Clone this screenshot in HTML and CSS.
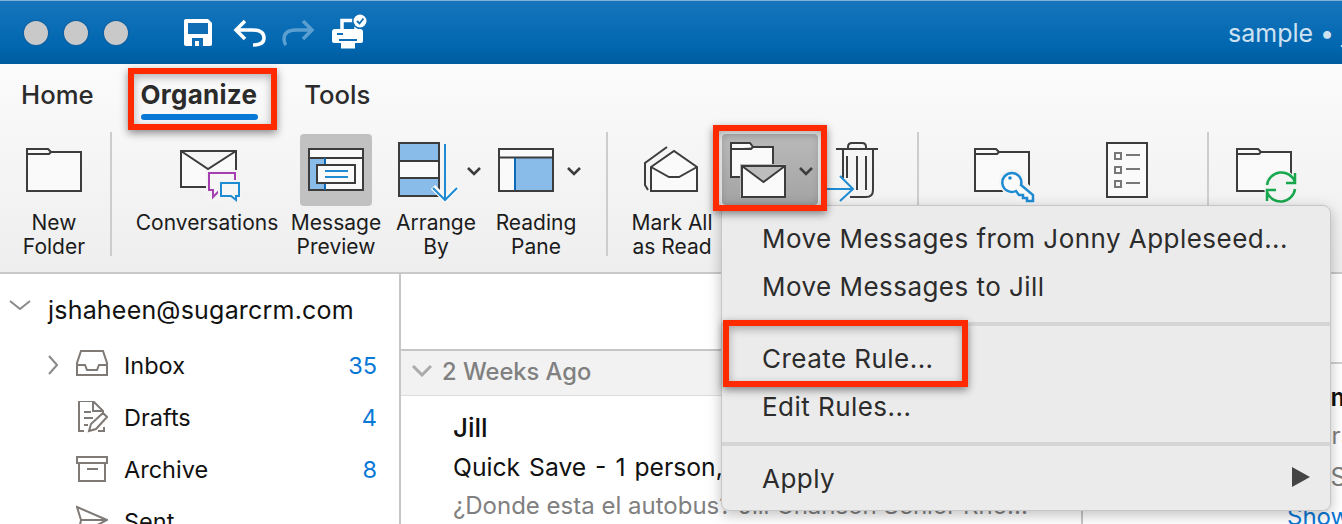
FILE: index.html
```html
<!DOCTYPE html>
<html lang="en">
<head>
<meta charset="utf-8">
<title>Outlook Organize</title>
<link rel="stylesheet" href="styles.css">
</head>
<body>
<div class="app">
  <header class="titlebar">
    <div class="lights"><span class="light"></span><span class="light"></span><span class="light"></span></div>
    <svg class="qa" viewBox="170 8 210 48" aria-hidden="true">
      <path class="qa-fill" d="M186 18H208L212 22V43Q212 45 210 45H186Q184 45 184 43V20Q184 18 186 18Z"/>
      <path class="qa-cut" d="M188 22H208V33H188ZM192 37H203V45H192Z"/>
      <path class="qa-fill" d="M195 40H199V45H195Z"/>
      <path class="qa-line" d="M245 20L236 29L245 38M236 29H252Q264 29 264 37Q264 44 253 44"/>
      <path class="qa-dim" d="M303 20L312 29L303 38M312 29H296Q284 29 284 38Q284 42 286 44"/>
      <path class="qa-line" d="M342 29V19.500H356V29"/>
      <path class="qa-fill" d="M335 28H360Q363 28 363 31V40Q363 42 361 42H334Q332 42 332 40V31Q332 28 335 28Z"/>
      <path class="qa-cut" d="M337 32H343V34H337ZM339 38H357V40H339Z"/>
      <path class="qa-fill" d="M341 40H355V47.500H341Z"/>
      <circle class="qa-cut" cx="360" cy="20" r="8"/>
      <circle class="qa-fill" cx="360" cy="20" r="6.500"/>
      <path class="qa-tick" d="M357 20L359.500 22.500L363.500 17.500"/>
    </svg>
    <div class="doc-title">sample • jshaheen@sugarcrm.com</div>
  </header>

  <div class="chrome">
    <nav class="tabs">
      <span class="tab tab-home">Home</span>
      <span class="tab tab-org">Organize</span>
      <span class="tab tab-tools">Tools</span>
    </nav>
    <div class="ribbon">
      <div class="item i-new">
        <svg class="icon" viewBox="0 134 108 72" aria-hidden="true">
          <path class="ln pg" d="M27 191V149H48L51 152H81V191ZM27 154H49L51 152"/>
        </svg>
        <span class="label">New<br>Folder</span>
      </div>
      <i class="sep s1"></i>
      <div class="item i-conv">
        <svg class="icon" viewBox="133 134 148 72" aria-hidden="true">
          <path class="ln pg" d="M181 151H236V187H181ZM181 151L208 169L236 151"/>
          <path class="halo" d="M206 170H238V193H222V201H206Z"/>
          <path class="bub-p" d="M209 173H235V190H220L213 197V190H209Z"/>
          <path class="halo" d="M218 180H242V199H218Z"/>
          <path class="bub-b" d="M221 183H239V196H236V200L231 196H221Z"/>
        </svg>
        <span class="label">Conversations</span>
      </div>
      <div class="item i-msg">
        <svg class="icon" viewBox="290 134 92 72" aria-hidden="true">
          <rect class="pressed" x="300" y="134" width="72" height="72" rx="4"/>
          <rect class="pg" x="309" y="149" width="54" height="41"/>
          <rect class="blue" x="310" y="158" width="15" height="32"/>
          <path class="ln" d="M309 149H363V190H309ZM309 158H363"/>
          <path class="ln-deep" d="M325 158V190"/>
          <rect class="ln pg" x="317" y="165" width="38" height="18"/>
          <path class="ln-blue" d="M325 171H348M325 177H348"/>
        </svg>
        <span class="label">Message<br>Preview</span>
      </div>
      <div class="item i-arr">
        <svg class="icon" viewBox="390 134 92 72" aria-hidden="true">
          <rect class="blue" x="399" y="143" width="40" height="53"/>
          <rect class="pg" x="399" y="161" width="40" height="17"/>
          <path class="ln" d="M399 143H439V196H399ZM399 161H439M399 178H439"/>
          <path class="halo-line" d="M433 187L445 199L457 187"/>
          <path class="ln-blue" d="M445 144V200M433 188L445 200L457 188"/>
          <path class="chev" d="M468 168L474 174L480 168"/>
        </svg>
        <span class="label">Arrange<br>By</span>
      </div>
      <div class="item i-read">
        <svg class="icon" viewBox="490 134 92 72" aria-hidden="true">
          <rect class="pg" x="499" y="149" width="54" height="42"/>
          <rect class="blue" x="515" y="158" width="38" height="33"/>
          <path class="ln" d="M499 149H553V191H499ZM499 157.500H553"/>
          <path class="ln-deep" d="M515 158V190"/>
          <path class="chev" d="M568 168L574 174L580 168"/>
        </svg>
        <span class="label">Reading<br>Pane</span>
      </div>
      <i class="sep s2"></i>
      <div class="item i-mark">
        <svg class="icon" viewBox="628 134 88 72" aria-hidden="true">
          <path class="ln" d="M667 147L645 163V185L648 190"/>
          <path class="ln pg" d="M651 167L674 151L697 167V191H651Z"/>
          <path class="ln" d="M651 167L669 177H679L697 167"/>
        </svg>
        <span class="label">Mark All<br>as Read</span>
      </div>
      <div class="item i-move">
        <svg class="icon" viewBox="722 134 168 72" aria-hidden="true">
          <defs>
            <linearGradient id="pressGrad" x1="0" y1="0" x2="0" y2="1">
              <stop offset="0" stop-color="#bababa"/>
              <stop offset="1" stop-color="#a3a3a3"/>
            </linearGradient>
          </defs>
          <rect class="pressed-grad" x="722" y="134" width="96" height="71" rx="4"/>
          <path class="ln pg" d="M731 177V143H750L753 147H773V177ZM731 149H751L753 147"/>
          <rect class="halo-soft" x="740" y="164" width="46" height="33"/>
          <path class="ln pg" d="M742 166H785V197H742ZM742 166L763.500 182L785 166"/>
          <path class="chev" d="M800 168L806 174L812 168"/>
          <path class="ln" d="M836 149H878M848 149V147Q848 143 852 143H862Q866 143 866 147V149M843 149V178M873 149V190Q873 197 866 197H850M847 156V178M857 156V190M866 156V190"/>
          <path class="ln-blue" d="M827 189H852M840 176L853 189L840 201"/>
        </svg>
      </div>
      <i class="sep s3"></i>
      <div class="item i-rules">
        <svg class="icon" viewBox="950 134 220 72" aria-hidden="true">
          <path class="ln pg" d="M975 191V149H996L999 152H1029V191ZM975 154H997L999 152"/>
          <circle class="halo" cx="1012" cy="182" r="13"/>
          <path class="halo" d="M1022 178L1037 193V205H1014Z"/>
          <path class="key pg" d="M1021 185L1033 195V201H1027V198H1023V195H1019L1016 191A9.500 9.500 0 1 1 1021 185Z"/>
          <circle class="dot-blue" cx="1010" cy="178" r="1.800"/>
          <rect class="ln pg" x="1107" y="143" width="40" height="54"/>
          <path class="ln-grey" d="M1115 153H1121V159H1115ZM1115 167H1121V173H1115ZM1115 181H1121V187H1115ZM1126 155H1140M1126 169H1140M1126 183H1140"/>
        </svg>
      </div>
      <i class="sep s4"></i>
      <div class="item i-sync">
        <svg class="icon" viewBox="1230 134 80 72" aria-hidden="true">
          <path class="ln pg" d="M1237 191V149H1258L1261 152H1291V191ZM1237 154H1259L1261 152"/>
          <circle class="halo" cx="1281" cy="187" r="17"/>
          <path class="ln-green" d="M1267 185A14.500 14.500 0 0 1 1295 182M1295 189A14.500 14.500 0 0 1 1267 192M1295 173V183H1286M1267 201V190H1276"/>
        </svg>
      </div>
    </div>
  </div>

  <main class="panes">
    <aside class="sidebar">
      <div class="account">
        <svg class="acct-chev" viewBox="0 0 22 12" aria-hidden="true"><path d="M1 1L11 9L21 1"/></svg>
        <span>jshaheen@sugarcrm.com</span>
      </div>
      <div class="folder">
        <svg class="f-exp" viewBox="0 0 10 20" aria-hidden="true"><path d="M1 1L9 10L1 19"/></svg>
        <svg class="f-icon" viewBox="76 349 32 32" aria-hidden="true"><path d="M77 375V363L81 351H103L107 363V375ZM77 365H85L87 370H97L99 365H107"/></svg>
        <span class="f-name">Inbox</span><span class="f-count">35</span>
      </div>
      <div class="folder">
        <svg class="f-icon" viewBox="76 401 32 32" aria-hidden="true"><path d="M84 431H79V401H93L103 411V414M93 401V411H103M84 412H91M84 418H93M84 425H88M98 431H104V427M89 431L91 424L103 413L107 417L96 429Z"/></svg>
        <span class="f-name">Drafts</span><span class="f-count">4</span>
      </div>
      <div class="folder">
        <svg class="f-icon" viewBox="76 453 32 32" aria-hidden="true"><path d="M77 457H107V463H77ZM79 463V481H105V463M87 469H98"/></svg>
        <span class="f-name">Archive</span><span class="f-count">8</span>
      </div>
      <div class="folder">
        <svg class="f-icon" viewBox="76 505 32 32" aria-hidden="true"><path d="M77 507L107 520L78 535L81 520ZM81 520H107"/></svg>
        <span class="f-name">Sent</span>
      </div>
    </aside>
    <section class="list">
      <div class="list-top"></div>
      <div class="group">
        <svg class="group-chev" viewBox="0 0 20 12" aria-hidden="true"><path d="M1 1L10 10L19 1"/></svg>
        <span>2 Weeks Ago</span>
      </div>
      <div class="mail">
        <div class="from">Jill</div>
        <div class="subject">Quick Save - 1 person,</div>
        <div class="preview">¿Donde esta el autobus? Jill Chanson Senior Rho...</div>
      </div>
    </section>
    <section class="reader">
      <div class="reader-top"></div>
      <div class="r-name">Jimmy</div>
      <div class="r-line">Users</div>
      <div class="r-sub">To: S</div>
      <div class="r-link">Show</div>
    </section>
  </main>

  <div class="menu">
    <div class="mi">Move Messages from Jonny Appleseed...</div>
    <div class="mi">Move Messages to Jill</div>
    <div class="msep"></div>
    <div class="mi">Create Rule...</div>
    <div class="mi">Edit Rules...</div>
    <div class="msep"></div>
    <div class="mi mi-sub">Apply<span class="tri"></span></div>
  </div>

  <div class="mark mark-tab"></div>
  <div class="mark mark-btn"></div>
  <div class="mark mark-rule"></div>
</div>
</body>
</html>
```
FILE: styles.css
```css
* { box-sizing: border-box; }
html, body { margin: 0; padding: 0; background: #fff; }
body { font-family: Inter, "Liberation Sans", sans-serif; color: #111; }
.app { position: relative; width: 1342px; height: 524px; overflow: hidden; display: flex; flex-direction: column; }

/* title bar */
.titlebar { flex: none; height: 64px; display: flex; align-items: center; background: linear-gradient(#1675bc, #0167b0 70%, #015c9f); border-top: 1px solid #7fb0d8; }
.lights { display: flex; gap: 16px; margin-left: 24px; }
.light { width: 24px; height: 24px; border-radius: 50%; background: #c9c9c9; box-shadow: 0 0 0 1px #0f5f9f; }
.qa { width: 210px; height: 48px; margin-left: 42px; flex: none; }
.qa-fill { fill: #fff; }
.qa-cut { fill: #0e6db5; }
.qa-line { fill: none; stroke: #fff; stroke-width: 3.500; }
.qa-dim { fill: none; stroke: #5b9fd1; stroke-width: 3.500; }
.qa-tick { fill: none; stroke: #0e6db5; stroke-width: 1.800; }
.doc-title { margin-left: 848px; white-space: nowrap; font-size: 25px; color: #cfe2f2; flex: none; }

/* ribbon */
.chrome { flex: none; height: 210px; background: linear-gradient(#fbfbfb, #eeeeee); border-bottom: 2px solid #c9c9c9; }
.tabs { height: 68px; display: flex; align-items: center; padding-bottom: 6px; font-size: 25.700px; font-weight: 500; color: #2b2b2b; }
.tab { line-height: 30px; }
.tab-home { margin-left: 21px; }
.tab-org { position: relative; margin-left: 47px; font-size: 26px; font-weight: 700; letter-spacing: .25px; }
.tab-org::after { content: ""; position: absolute; left: 0; right: -1px; top: 34px; height: 6px; border-radius: 3px; background: #0a78d7; }
.tab-tools { margin-left: 47px; }
.ribbon { display: flex; align-items: flex-start; height: 140px; }
.item { flex: none; display: flex; flex-direction: column; align-items: center; padding-top: 2px; }
.icon { display: block; height: 72px; width: 100%; }
.label { margin-top: 5px; font-size: 21px; line-height: 24px; text-align: center; color: #1c1c1c; white-space: nowrap; }
.sep { flex: none; width: 2px; height: 124px; background: #cdcdcd; }
.s1 { margin-left: 2px; }
.s2 { margin-left: 24px; }
.s3 { margin-left: 27px; }
.s4 { margin-left: 37px; }
.i-new { width: 108px; }
.i-conv { width: 148px; margin-left: 21px; }
.i-msg { width: 92px; margin-left: 9px; }
.i-arr { width: 92px; margin-left: 8px; }
.i-read { width: 92px; margin-left: 8px; }
.i-mark { width: 88px; margin-left: 20px; }
.i-move { width: 168px; margin-left: 6px; }
.i-rules { width: 220px; margin-left: 31px; }
.i-sync { width: 80px; margin-left: 21px; }

.ln { fill: none; stroke: #3c3c3c; stroke-width: 2; }
.pg { fill: #fafafa; }
.ln.pg { fill: #fafafa; }
.blue { fill: #8abce9; }
.pressed { fill: #c1c1c1; }
.pressed-grad { fill: url(#pressGrad); }
.ln-deep { fill: none; stroke: #0f69b4; stroke-width: 2; }
.ln-blue { fill: none; stroke: #1f8bd2; stroke-width: 2; }
.key { stroke: #1f8bd2; stroke-width: 2.500; }
.ln-grey { fill: none; stroke: #777; stroke-width: 2; }
.ln-green { fill: none; stroke: #17a84d; stroke-width: 2.500; }
.dot-blue { fill: #1f8bd2; }
.chev { fill: none; stroke: #3c3c3c; stroke-width: 2.600; }
.halo { fill: #f4f4f4; }
.halo-soft { fill: #bdbdbd; }
.halo-line { fill: none; stroke: #fafafa; stroke-width: 6; }
.bub-p { fill: #f6f6f6; stroke: #a640b0; stroke-width: 2; }
.bub-b { fill: #f6f6f6; stroke: #1f8bd2; stroke-width: 2; }

/* panes */
.panes { flex: 1; min-height: 0; display: grid; grid-template-columns: 401px 680px 261px; }
.sidebar { border-right: 2px solid #c6c6c6; overflow: hidden; }
.account { height: 65px; display: flex; align-items: center; padding: 6px 0 0 9px; font-size: 25px; letter-spacing: .2px; }
.acct-chev { width: 22px; height: 12px; margin: -8px 17px 0 0; flex: none; }
.acct-chev path { fill: none; stroke: #8a8a8a; stroke-width: 2; }
.folder { height: 52px; display: flex; align-items: center; padding: 0 22px 0 76px; position: relative; font-size: 23.500px; }
.f-exp { position: absolute; left: 48px; top: 16px; width: 10px; height: 20px; }
.f-exp path { fill: none; stroke: #8a8a8a; stroke-width: 2; }
.f-icon { width: 32px; height: 32px; flex: none; }
.f-icon path { fill: none; stroke: #7f7a76; stroke-width: 2; }
.f-name { margin-left: 16px; }
.f-count { margin-left: auto; color: #0a78d7; }

.list { overflow: hidden; }
.list-top { height: 77px; border-bottom: 2px solid #c6c6c6; }
.group { height: 45px; display: flex; align-items: center; padding: 0 0 4px 11px; background: #f2f2f2; border-bottom: 1px solid #dcdcdc; font-size: 23.700px; font-weight: 500; color: #808080; }
.group-chev { width: 20px; height: 12px; margin-right: 10px; flex: none; }
.group-chev path { fill: none; stroke: #ababab; stroke-width: 3; }
.mail { padding: 15px 0 0 52px; white-space: nowrap; }
.from { font-size: 26px; font-weight: 500; line-height: 34px; }
.subject { font-size: 24.700px; word-spacing: 2px; line-height: 34px; margin-top: 5px; }
.preview { font-size: 24px; line-height: 34px; margin-top: 5px; color: #808080; }

.reader { border-left: 2px solid #c6c6c6; padding-left: 204px; white-space: nowrap; overflow: hidden; }
.reader-top { height: 90px; margin-left: -206px; border-bottom: 2px solid #d0d0d0; }
.r-name { margin-top: 16px; font-size: 25px; font-weight: 600; line-height: 34px; }
.r-line { margin-top: 5px; font-size: 24px; line-height: 34px; color: #808080; }
.r-sub { margin-top: 7px; font-size: 25px; line-height: 34px; color: #808080; }
.r-link { margin-top: 9px; font-size: 24px; line-height: 28px; color: #0a78d7; }

/* popup menu */
.menu { position: absolute; left: 721px; top: 205px; width: 610px; height: 306px; padding-top: 8px; background: #ebebeb; border: 1px solid #c6c6c6; border-radius: 0 8px 8px 8px; box-shadow: 0 4px 14px rgba(0, 0, 0, .25); font-size: 26px; letter-spacing: .46px; color: #2c2c2c; }
.mi { height: 48px; display: flex; align-items: center; padding-left: 40px; white-space: nowrap; }
.mi-sub { position: relative; }
.tri { position: absolute; left: 570px; top: 13px; width: 0; height: 0; border-left: 18px solid #444; border-top: 10px solid transparent; border-bottom: 10px solid transparent; }
.msep { height: 4px; margin: 12px 0 8px; background: #d5d5d5; }

/* red annotations */
.mark { position: absolute; border: 6px solid #ff2a00; box-shadow: 0 3px 8px rgba(0, 0, 0, .45), inset 0 3px 8px rgba(0, 0, 0, .3); }
.mark-tab { left: 128px; top: 68px; width: 149px; height: 62px; }
.mark-btn { left: 713px; top: 125px; width: 114px; height: 86px; }
.mark-rule { left: 723px; top: 320px; width: 245px; height: 67px; }
```
